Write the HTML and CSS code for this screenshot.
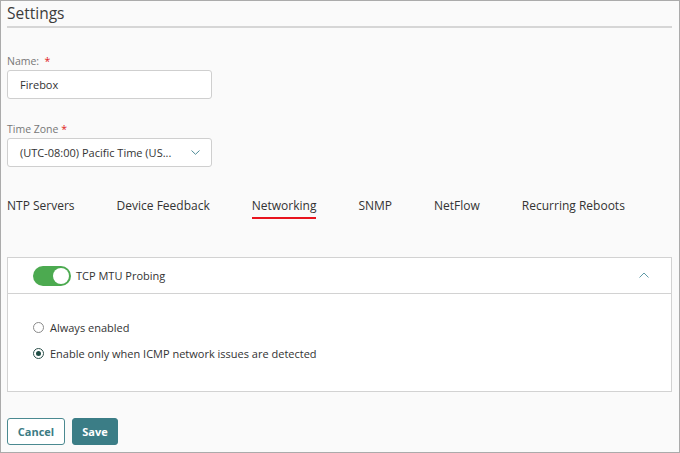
FILE: index.html
```html
<!DOCTYPE html>
<html>
<head>
<meta charset="utf-8">
<link rel="stylesheet" href="styles.css">
</head>
<body>
<div class="frame">
  <h1 class="title">Settings</h1>

  <div class="field first">
    <div class="label">Name:&nbsp; <span class="req">*</span></div>
    <div class="input">Firebox</div>
  </div>

  <div class="field">
    <div class="label">Time Zone <span class="req">*</span></div>
    <div class="input select">
      <span>(UTC-08:00) Pacific Time (US...</span>
      <svg class="chev" width="9" height="5" viewBox="0 0 9 5"><path d="M0.5 0.5 L4.5 4.3 L8.5 0.5" fill="none" stroke="#4f8c98" stroke-width="1"/></svg>
    </div>
  </div>

  <div class="tabs">
    <span class="tab">NTP Servers</span>
    <span class="tab">Device Feedback</span>
    <span class="tab active">Networking</span>
    <span class="tab">SNMP</span>
    <span class="tab">NetFlow</span>
    <span class="tab">Recurring Reboots</span>
  </div>

  <div class="panel">
    <div class="panel-head">
      <span class="toggle"><span class="knob"></span></span>
      <span class="panel-title">TCP MTU Probing</span>
      <svg class="up" width="10" height="6" viewBox="0 0 10 6"><path d="M0.5 5.5 L5 1 L9.5 5.5" fill="none" stroke="#5f9aa6" stroke-width="1"/></svg>
    </div>
    <div class="panel-body">
      <div class="radio-row"><span class="radio"></span><span>Always enabled</span></div>
      <div class="radio-row"><span class="radio on"></span><span>Enable only when ICMP network issues are detected</span></div>
    </div>
  </div>

  <div class="actions">
    <button class="btn cancel">Cancel</button>
    <button class="btn save">Save</button>
  </div>
</div>
</body>
</html>
```

FILE: styles.css
```css
html, body {
  margin: 0;
  padding: 0;
}
body {
  font-family: "Open Sans", "Liberation Sans", sans-serif;
  color: #333;
}
.frame {
  box-sizing: border-box;
  width: 680px;
  height: 453px;
  border: 1px solid #ababab;
  background: #fafafa;
  padding: 0 7px 0 6px;
  overflow: hidden;
}
.title {
  margin: 0;
  padding: 1px 0 2px 0;
  font-size: 15.5px;
  font-weight: normal;
  line-height: 22px;
  color: #3c3c3c;
  border-bottom: 2px solid #d6d6d6;
}
.field {
  margin-top: 23px;
}
.field.first {
  margin-top: 26px;
}
.label {
  font-size: 10.5px;
  line-height: 14px;
  color: #777;
  margin-bottom: 2px;
}
.req {
  color: #e02020;
}
.input {
  box-sizing: border-box;
  width: 205px;
  height: 29px;
  border: 1px solid #cfcfcf;
  border-radius: 3px;
  background: #fff;
  padding: 0 11px 0 12px;
  font-size: 11px;
  line-height: 27px;
  color: #333;
}
.select {
  display: flex;
  align-items: center;
  justify-content: space-between;
}
.chev {
  display: block;
}
.tabs {
  display: flex;
  gap: 42px;
  margin-top: 30px;
  font-size: 12px;
  line-height: 18px;
  color: #333;
}
.tab {
  padding-bottom: 2px;
  border-bottom: 2px solid transparent;
}
.tab.active {
  border-bottom-color: #e8141e;
}
.panel {
  margin-top: 38px;
  border: 1px solid #d2d2d2;
  background: #fff;
}
.panel-head {
  height: 35px;
  display: flex;
  align-items: center;
  padding: 0 22px 0 25px;
  border-bottom: 1px solid #d2d2d2;
}
.toggle {
  box-sizing: border-box;
  width: 38px;
  height: 20px;
  border-radius: 10px;
  background: #4caa50;
  display: flex;
  justify-content: flex-end;
  align-items: center;
  padding-right: 2px;
}
.knob {
  width: 16px;
  height: 16px;
  border-radius: 50%;
  background: #fff;
}
.panel-title {
  margin-left: 5px;
  font-size: 11px;
  color: #333;
  flex: 1;
}
.up {
  display: block;
  margin-top: -2px;
}
.panel-body {
  padding: 20px 25px 25px 25px;
}
.radio-row {
  display: flex;
  align-items: center;
  height: 26px;
  font-size: 11px;
  color: #333;
}
.radio {
  box-sizing: border-box;
  width: 11px;
  height: 11px;
  border-radius: 50%;
  border: 1px solid #8a8a8a;
  background: #fff;
  margin-right: 6px;
  position: relative;
}
.radio.on {
  border-color: #2b4f4a;
}
.radio.on::after {
  content: "";
  position: absolute;
  left: 2px;
  top: 2px;
  width: 5px;
  height: 5px;
  border-radius: 50%;
  background: #1f4d45;
}
.actions {
  display: flex;
  gap: 7px;
  margin-top: 26px;
}
.btn {
  box-sizing: border-box;
  height: 27px;
  border-radius: 3px;
  font-family: "Open Sans", "Liberation Sans", sans-serif;
  font-weight: bold;
  font-size: 11px;
  padding: 0;
  cursor: pointer;
}
.cancel {
  width: 58px;
  background: #fff;
  color: #3b7b84;
  border: 1px solid #4a8990;
}
.save {
  width: 46px;
  background: #3b7d86;
  color: #fff;
  border: 1px solid #3b7d86;
}
```
